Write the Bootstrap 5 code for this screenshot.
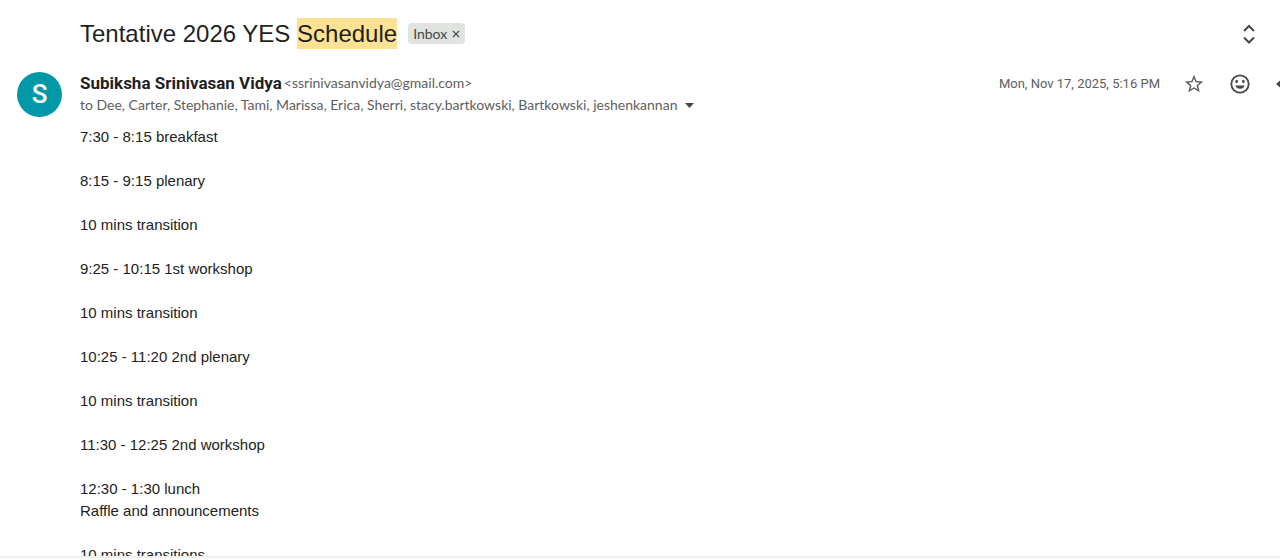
<!DOCTYPE html>
<html lang="en">
<head>
<meta charset="utf-8">
<meta name="viewport" content="width=device-width, initial-scale=1">
<title>Tentative 2026 YES Schedule</title>
<link href="https://cdn.jsdelivr.net/npm/bootstrap@5.3.0/dist/css/bootstrap.min.css" rel="stylesheet">
<style>
  body { font-family: Lato, "Open Sans", sans-serif; font-variant-ligatures: none; color: #1f1f1f; background: #fff; padding-bottom: 2px; }
  .mail-view { border-bottom: 2px solid #efefef; }
  .gutter { padding-left: 80px; }
  .subject-bar { padding-top: 18px; }
  .subject { font: 24px/31px "Liberation Sans", sans-serif; }
  .subject .hit { background: #fde293; color: inherit; padding: 0; display: inline-block; }
  .label-chip { background: #e1e3e1; color: #444746; border-radius: 4px; font-size: 14px; line-height: 21px; height: 21px; padding: 0 5px; gap: 5px; margin-left: 11px; }
  .plain { border: 0; background: none; padding: 0; color: #444746; line-height: 1; }
  .expand { margin-right: 19px; }
  .mail-head { padding-top: 23px; }
  .avatar { width: 45px; height: 45px; margin: 0 18px 0 17px; background: #0097a7; color: #fff; font: 500 26px/45px Roboto, sans-serif; }
  .sender { font: 700 17px/22px Roboto, sans-serif; }
  .meta { font-size: 14px; line-height: 22px; color: #5e5e5e; }
  .address { margin-left: 2px; }
  .sent-at { font: 400 13px/22px Roboto, sans-serif; color: #5e5e5e; }
  .actions { gap: 22px; }
  .star { color: #5e5e5e; }
  .reply { width: 6px; overflow: hidden; }
  .mail-body { font: 15px/22px "Liberation Sans", sans-serif; color: #222; padding-top: 9px; }
  .mail-body p { margin-bottom: 22px; }
</style>
</head>
<body class="vh-100">
<main class="mail-view h-100 overflow-hidden d-flex flex-column">
  <header class="subject-bar gutter d-flex align-items-center flex-shrink-0">
    <h1 class="subject mb-0">Tentative 2026 YES <mark class="hit">Schedule</mark></h1>
    <span class="label-chip d-inline-flex align-items-center">Inbox
      <button class="plain d-flex" type="button" aria-label="Remove label Inbox">
        <svg width="8" height="8" viewBox="0 0 9 9" fill="none" stroke="currentColor" stroke-width="1.4"><path d="M1 1l7 7M8 1l-7 7"/></svg>
      </button>
    </span>
    <button class="plain expand d-flex ms-auto" type="button" aria-label="Expand all">
      <svg width="24" height="24" viewBox="0 0 24 24" fill="none" stroke="currentColor" stroke-width="2"><path d="M7 9l5-5 5 5M7 15.500l5 5 5-5"/></svg>
    </button>
  </header>

  <section class="mail-head d-flex flex-shrink-0">
    <div class="avatar rounded-circle text-center flex-shrink-0" aria-hidden="true">S</div>
    <div class="flex-grow-1">
      <div class="d-flex align-items-center">
        <span class="sender">Subiksha Srinivasan Vidya</span>
        <span class="meta address">&lt;ssrinivasanvidya@gmail.com&gt;</span>
      </div>
      <div class="meta d-flex align-items-center gap-2">
        <span>to Dee, Carter, Stephanie, Tami, Marissa, Erica, Sherri, stacy.bartkowski, Bartkowski, jeshenkannan</span>
        <button class="plain d-flex" type="button" aria-label="Show details">
          <svg width="9" height="5" viewBox="0 0 9 5" fill="currentColor"><path d="M0 0h9L4.500 5z"/></svg>
        </button>
      </div>
    </div>
    <div class="actions d-flex align-items-center align-self-start">
      <time class="sent-at" datetime="2025-11-17T17:16">Mon, Nov 17, 2025, 5:16 PM</time>
      <button class="plain star d-flex" type="button" aria-label="Star">
        <svg width="24" height="24" viewBox="-1 -1 26 26" fill="currentColor"><path d="M22 9.240l-7.190-.620L12 2 9.190 8.630 2 9.240l5.460 4.730L5.820 21 12 17.270 18.180 21l-1.630-7.030L22 9.240zM12 15.400l-3.760 2.270 1-4.280-3.320-2.880 4.380-.380L12 6.100l1.710 4.040 4.380.380-3.320 2.880 1 4.280L12 15.400z"/></svg>
      </button>
      <button class="plain d-flex" type="button" aria-label="Add reaction">
        <svg width="24" height="24" viewBox="0 0 24 24"><circle cx="12" cy="12" r="8.700" fill="none" stroke="currentColor" stroke-width="1.800"/><circle cx="8.700" cy="9.500" r="1.400" fill="currentColor"/><circle cx="15.300" cy="9.500" r="1.400" fill="currentColor"/><path d="M7.500 13.500h9a4.600 4.200 0 0 1-9 0z" fill="currentColor"/></svg>
      </button>
      <button class="plain reply d-flex" type="button" aria-label="Reply">
        <svg class="flex-shrink-0" width="24" height="24" viewBox="0 0 24 24" fill="currentColor"><path d="M10 9V5l-8 7 8 7v-4.100c5 0 8.500 1.600 11 5.100-1-5-4-10-11-11z"/></svg>
      </button>
    </div>
  </section>

  <article class="mail-body gutter overflow-hidden">
    <p>7:30 - 8:15 breakfast</p>
    <p>8:15 - 9:15 plenary</p>
    <p>10 mins transition</p>
    <p>9:25 - 10:15 1st workshop</p>
    <p>10 mins transition</p>
    <p>10:25 - 11:20 2nd plenary</p>
    <p>10 mins transition</p>
    <p>11:30 - 12:25 2nd workshop</p>
    <p>12:30 - 1:30 lunch<br>Raffle and announcements</p>
    <p>10 mins transitions</p>
  </article>
</main>
<script src="https://cdn.jsdelivr.net/npm/bootstrap@5.3.0/dist/js/bootstrap.bundle.min.js"></script>
</body>
</html>
